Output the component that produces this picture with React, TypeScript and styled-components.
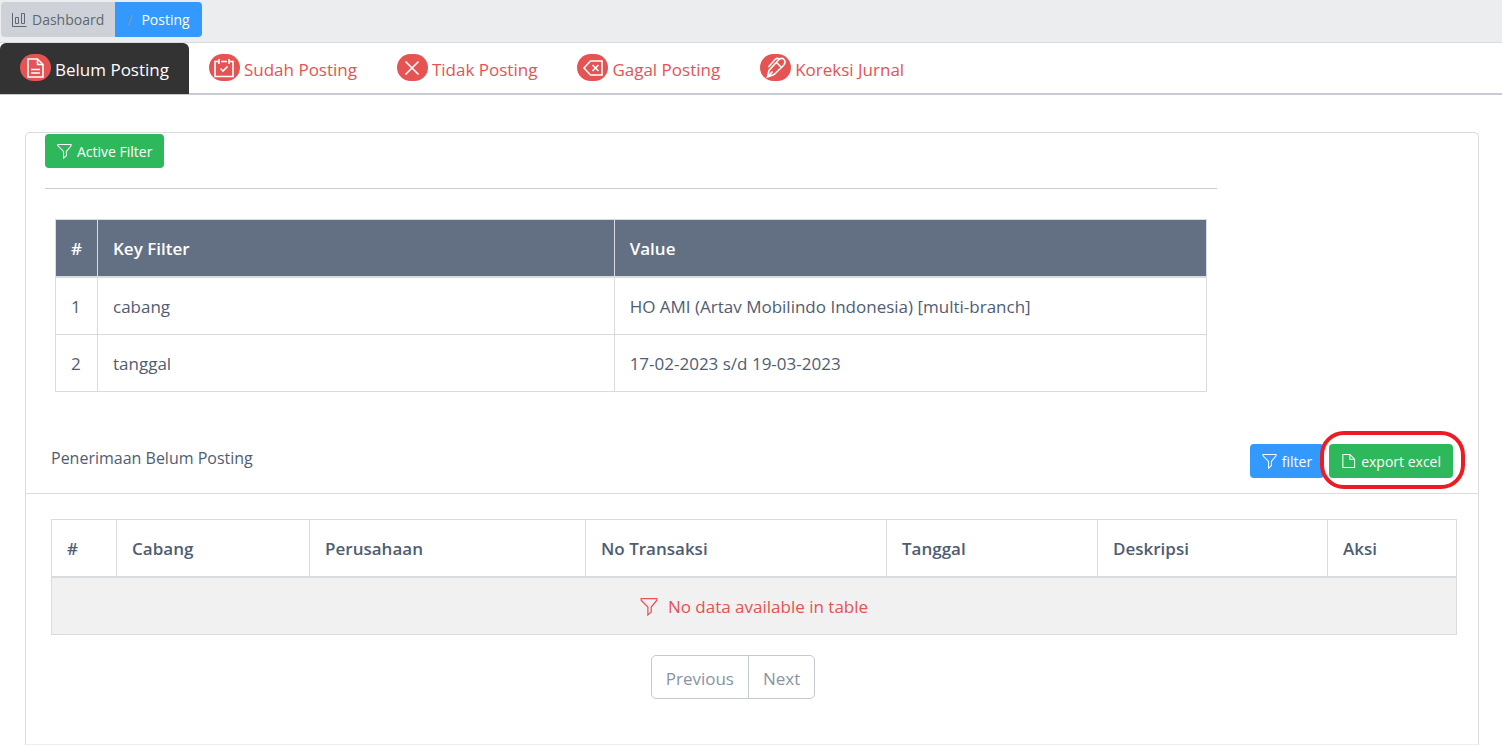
import React from 'react';
import styled, { createGlobalStyle, css } from 'styled-components';

const GlobalStyle = createGlobalStyle`
  *, *::before, *::after { box-sizing: border-box; }
  body {
    margin: 0;
    background: #fff;
    color: #4f5d73;
    font-family: 'Segoe UI', 'Open Sans', 'Noto Sans', sans-serif;
    font-size: 17px;
    line-height: 26px;
  }
  a { color: inherit; text-decoration: none; }
  button { font: inherit; cursor: pointer; }
`;

const Icon = styled.svg<{ $size: number; $stroke?: number }>`
  width: ${(p) => p.$size}px;
  height: ${(p) => p.$size}px;
  flex: none;
  overflow: visible;
  fill: none;
  stroke: currentColor;
  stroke-width: ${(p) => p.$stroke ?? 1.1};
`;

const ChartIcon = () => (
  <Icon $size={16} $stroke={1} viewBox="0 0 16 16" aria-hidden="true">
    <path d="M.5 1v13.500H14.500M3.500 5.500h3v6h-3zM9.500 1.500h3v10h-3z" />
  </Icon>
);
const FunnelIcon = ({ size = 15 }: { size?: number }) => (
  <Icon $size={size} viewBox="0 0 16 16" aria-hidden="true">
    <path d="M1 .5h14V2L10 8v4.500L7 15V8L1 2z" />
  </Icon>
);
const PageIcon = () => (
  <Icon $size={15} viewBox="0 0 16 16" aria-hidden="true">
    <path d="M2 .5h7.500L14.500 5.500v9H2zM9.500 .5v5h5" />
  </Icon>
);
const DocumentIcon = () => (
  <Icon $size={20} $stroke={1.6} viewBox="0 0 20 20" aria-hidden="true">
    <path d="M2 1h9.500l5.500 5.500V19H2zM11.500 1v5.500H17M5 11.500h9M5 15h9" />
  </Icon>
);
const CalendarIcon = () => (
  <Icon $size={20} $stroke={1.6} viewBox="0 0 20 20" aria-hidden="true">
    <path d="M5 3.500H1v15h18v-15h-4M7 3.500h6M5 1v5M15 1v5M6.500 10.500l2.500 2.500 4.500-4.500" />
  </Icon>
);
const CrossIcon = () => (
  <Icon $size={20} $stroke={1.6} viewBox="0 0 20 20" aria-hidden="true">
    <path d="M3.500 3.500l13 13M16.500 3.500l-13 13" />
  </Icon>
);
const BackspaceIcon = () => (
  <Icon $size={20} $stroke={1.6} viewBox="0 0 20 20" aria-hidden="true">
    <path d="M7.500 3H19v14H7.500L1 10zM9.500 7l6 6M15.500 7l-6 6" />
  </Icon>
);
const PenIcon = () => (
  <Icon $size={20} $stroke={1.6} viewBox="0 0 20 20" aria-hidden="true">
    <path d="M1.500 19L3 12.500 12 2.500Q15.500-1 18 1.500T17 8L8 16.500zM1.500 19L6.500 13.500M2.500 9L9 1.500Q11-.5 13.500 1M10.500 4.500l5 5" />
  </Icon>
);

const Topbar = styled.nav`
  height: 43px;
  padding: 2px 1px;
  background: #ebedef;
  border-bottom: 1px solid #d8dbe0;
`;
const Crumbs = styled.ol`
  display: flex;
  margin: 0;
  padding: 0;
  list-style: none;
  font-size: 14px;
  line-height: 35px;
`;
const Crumb = styled.li<{ $active?: boolean }>`
  display: flex;
  align-items: center;
  height: 35px;
  padding: 0 11px;
  gap: 4px;
  color: #5c6873;
  background: #ced2d8;
  border-radius: 4px 0 0 4px;
  ${(p) => p.$active && css`
    gap: 9px;
    padding: 0 12px;
    color: #fff;
    background: #39f;
    border-radius: 0 4px 4px 0;
  `}
`;
const Slash = styled.span`
  color: #8a93a2;
`;

const Tabs = styled.nav`
  display: flex;
  border-bottom: 2px solid #c8ccd2;
`;
const Tab = styled.a<{ $active?: boolean }>`
  display: flex;
  align-items: center;
  gap: 4px;
  height: 51px;
  padding: 2px 20px 0;
  margin-bottom: -1px;
  color: ${(p) => (p.$active ? '#fff' : '#e55353')};
  background: ${(p) => (p.$active ? '#333' : 'transparent')};
  border-radius: 6px 6px 0 0;
`;
const TabBadge = styled.span`
  display: flex;
  align-items: center;
  justify-content: center;
  width: 31px;
  height: 27px;
  margin-bottom: 4px;
  color: #fff;
  background: #e55353;
  border-radius: 14px;
`;

const Main = styled.main`
  padding: 37px 23px 0 25px;
`;
const Card = styled.section`
  border: 1px solid #d8dbe0;
  border-bottom-color: #ebedef;
  border-radius: 5px 5px 0 0;
`;
const FilterArea = styled.div`
  display: grid;
  grid-template-columns: 10fr 2fr;
  padding: 1px 6px 0 4px;
`;
const FilterColumn = styled.div`
  padding: 0 15px;
`;
const Button = styled.button<{ $tone: 'green' | 'blue' }>`
  display: flex;
  align-items: center;
  gap: 5px;
  height: 34px;
  padding: 1px 12px 0;
  border: 0;
  border-radius: 4px;
  color: #fff;
  background: ${(p) => (p.$tone === 'green' ? '#2eb85c' : '#39f')};
  font-size: 14px;
`;
const Rule = styled.hr`
  margin: 20px 0 30px;
  border: 0;
  border-top: 1px solid #c8ccd2;
`;
const TableWrap = styled.div`
  padding: 0 10px;
`;
const Table = styled.table`
  width: 100%;
  table-layout: fixed;
  border-collapse: collapse;
  th, td {
    height: 57px;
    padding: 2px 15px 0;
    text-align: left;
    border: 1px solid #d8dbe0;
  }
  th {
    font-weight: 600;
    border-bottom-width: 2px;
  }
  tbody tr:first-child td {
    height: 58px;
  }
`;
const DarkHead = styled.thead`
  color: #fff;
  background: #636f83;
`;
const Col = styled.col<{ $w: string }>`
  width: ${(p) => p.$w};
`;

const CardHeader = styled.header`
  display: flex;
  align-items: flex-start;
  justify-content: space-between;
  margin-top: 40px;
  padding: 12px 25px 15px;
  border-bottom: 1px solid #d8dbe0;
`;
const Title = styled.h1`
  margin: 0;
  font-size: 16px;
  font-weight: 400;
  line-height: 28px;
`;
const Actions = styled.div`
  display: flex;
  gap: 5px;
`;
const Highlight = styled.div`
  position: relative;
  &::after {
    content: '';
    position: absolute;
    inset: -13px -12px -11px -9px;
    border: 4px solid #ed1c24;
    border-radius: 24px;
    pointer-events: none;
  }
`;
const CardBody = styled.div`
  padding: 25px 21px 45px 25px;
`;
const EmptyRow = styled.tr`
  color: #e55353;
  background: #f1f1f1;
`;
const EmptyMessage = styled.div`
  display: flex;
  align-items: center;
  justify-content: center;
  gap: 10px;
`;
const Pager = styled.nav`
  display: flex;
  justify-content: center;
  margin-top: 20px;
  padding-right: 42px;
`;
const PageButton = styled.button`
  height: 44px;
  padding: 3px 14px 0;
  color: #8a93a2;
  background: #fff;
  border: 1px solid #c4c9d0;
  &:first-child { border-radius: 5px 0 0 5px; }
  &:last-child { border-radius: 0 5px 5px 0; margin-left: -1px; }
`;

const tabs = [
  { label: 'Belum Posting', icon: <DocumentIcon /> },
  { label: 'Sudah Posting', icon: <CalendarIcon /> },
  { label: 'Tidak Posting', icon: <CrossIcon /> },
  { label: 'Gagal Posting', icon: <BackspaceIcon /> },
  { label: 'Koreksi Jurnal', icon: <PenIcon /> },
];
const filters = [
  ['cabang', 'HO AMI (Artav Mobilindo Indonesia) [multi-branch]'],
  ['tanggal', '17-02-2023 s/d 19-03-2023'],
];
const columns = [
  ['#', '4.63%'],
  ['Cabang', '13.74%'],
  ['Perusahaan', '19.64%'],
  ['No Transaksi', '21.42%'],
  ['Tanggal', '15.02%'],
  ['Deskripsi', '16.37%'],
  ['Aksi', '9.18%'],
];

export default function App() {
  return (
    <>
      <GlobalStyle />
      <Topbar aria-label="Breadcrumb">
        <Crumbs>
          <Crumb><ChartIcon /><a href="#dashboard">Dashboard</a></Crumb>
          <Crumb $active><Slash>/</Slash><a href="#posting">Posting</a></Crumb>
        </Crumbs>
      </Topbar>
      <Tabs>
        {tabs.map((t, i) => (
          <Tab key={t.label} href={`#tab-${i}`} $active={i === 0}>
            <TabBadge>{t.icon}</TabBadge>
            {t.label}
          </Tab>
        ))}
      </Tabs>
      <Main>
        <Card>
          <FilterArea>
            <FilterColumn>
              <Button type="button" $tone="green"><FunnelIcon />Active Filter</Button>
              <Rule />
              <TableWrap>
                <Table>
                  <colgroup><Col $w="42px" /><Col $w="44.9%" /><Col $w="auto" /></colgroup>
                  <DarkHead>
                    <tr><th>#</th><th>Key Filter</th><th>Value</th></tr>
                  </DarkHead>
                  <tbody>
                    {filters.map(([key, value], i) => (
                      <tr key={key}><td>{i + 1}</td><td>{key}</td><td>{value}</td></tr>
                    ))}
                  </tbody>
                </Table>
              </TableWrap>
            </FilterColumn>
          </FilterArea>
          <CardHeader>
            <Title>Penerimaan Belum Posting</Title>
            <Actions>
              <Button type="button" $tone="blue"><FunnelIcon />filter</Button>
              <Highlight>
                <Button type="button" $tone="green"><PageIcon />export excel</Button>
              </Highlight>
            </Actions>
          </CardHeader>
          <CardBody>
            <Table>
              <colgroup>{columns.map(([name, w]) => <Col key={name} $w={w} />)}</colgroup>
              <thead>
                <tr>{columns.map(([name]) => <th key={name}>{name}</th>)}</tr>
              </thead>
              <tbody>
                <EmptyRow>
                  <td colSpan={7}>
                    <EmptyMessage><FunnelIcon size={18} />No data available in table</EmptyMessage>
                  </td>
                </EmptyRow>
              </tbody>
            </Table>
            <Pager aria-label="Pagination">
              <PageButton type="button">Previous</PageButton>
              <PageButton type="button">Next</PageButton>
            </Pager>
          </CardBody>
        </Card>
      </Main>
    </>
  );
}
